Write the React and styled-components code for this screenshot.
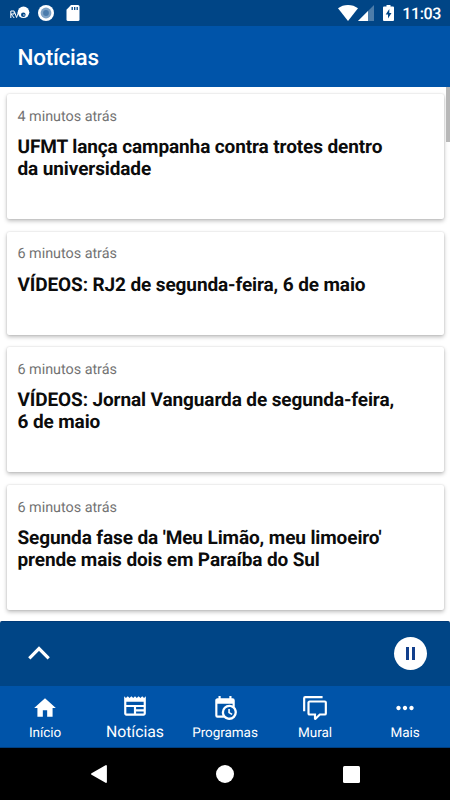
import React from "react";
import styled, { createGlobalStyle } from "styled-components";

const news = [
  {
    time: "4 minutos atrás",
    lines: ["UFMT lança campanha contra trotes dentro", "da universidade"],
  },
  {
    time: "6 minutos atrás",
    lines: ["VÍDEOS: RJ2 de segunda-feira, 6 de maio"],
  },
  {
    time: "6 minutos atrás",
    lines: ["VÍDEOS: Jornal Vanguarda de segunda-feira,", "6 de maio"],
  },
  {
    time: "6 minutos atrás",
    lines: ["Segunda fase da 'Meu Limão, meu limoeiro'", "prende mais dois em Paraíba do Sul"],
  },
];

const tabs = [
  { label: "Início", path: "M10 20v-6h4v6h5v-8h3L12 3 2 12h3v8z" },
  {
    label: "Notícias",
    active: true,
    path:
      "M22 3l-1.67 1.67L18.67 3 17 4.67 15.33 3l-1.66 1.67L12 3l-1.67 1.67L8.67 3 7 4.67 5.33 3 3.67 4.67 2 3v16c0 1.1.9 2 2 2h16c1.1 0 2-.9 2-2V3zM11 19H4v-6h7v6zm9 0h-7v-2h7v2zm0-4h-7v-2h7v2zm0-4H4V8h16v3z",
  },
  {
    label: "Programas",
    path:
      "M15 13h1.5v2.82l2.44 1.41-.75 1.3L15 16.69V13M19 8H5v11h4.67C9.24 18.09 9 17.07 9 16a7 7 0 0 1 7-7c1.07 0 2.09.24 3 .67V8M5 21a2 2 0 0 1-2-2V5c0-1.11.89-2 2-2h1V1h2v2h8V1h2v2h1a2 2 0 0 1 2 2v6.1c1.24 1.26 2 2.99 2 4.9a7 7 0 0 1-7 7c-1.91 0-3.64-.76-4.9-2H5m11-9.85A4.85 4.85 0 0 0 11.15 16c0 2.68 2.17 4.85 4.85 4.85A4.85 4.85 0 0 0 20.85 16c0-2.68-2.17-4.85-4.85-4.85z",
  },
  {
    label: "Mural",
    path:
      "M12 23a1 1 0 0 1-1-1v-3H7a2 2 0 0 1-2-2V7c0-1.11.9-2 2-2h14a2 2 0 0 1 2 2v10a2 2 0 0 1-2 2h-4.1l-3.7 3.71c-.2.19-.45.29-.7.29H12m1-6v3.08L16.08 17H21V7H7v10h6M3 15H1V3a2 2 0 0 1 2-2h16v2H3v12z",
  },
  {
    label: "Mais",
    path:
      "M6 10c-1.1 0-2 .9-2 2s.9 2 2 2 2-.9 2-2-.9-2-2-2zm12 0c-1.1 0-2 .9-2 2s.9 2 2 2 2-.9 2-2-.9-2-2-2zm-6 0c-1.1 0-2 .9-2 2s.9 2 2 2 2-.9 2-2-.9-2-2-2z",
  },
];

export default function App() {
  return (
    <Screen>
      <GlobalStyle />
      <StatusBar>
        <StatusIcons>
          <svg width="20" height="14" viewBox="0 0 20 14">
            <g fill="none" stroke="#fff" strokeWidth="1">
              <path d="M.8 12V5h3.4v3H1l3.2 4" />
              <path d="M4.6 6l2 5.5L8.5 6" />
            </g>
            <circle cx="13.5" cy="6.3" r="5.8" fill="#fff" />
            <circle cx="13.3" cy="8.7" r="2.3" fill="#004586" />
            <circle cx="13.9" cy="8.9" r="1" fill="#7fa3c6" />
          </svg>
          <svg width="16" height="16" viewBox="0 0 16 16">
            <circle cx="8" cy="8" r="8" fill="#fff" />
            <circle cx="8" cy="8" r="5.4" fill="#7fa3c6" />
            <circle cx="8" cy="8" r="2.9" fill="#4b7cac" />
          </svg>
          <svg width="14" height="16" viewBox="0 0 14 16">
            <path
              d="M5 0h7a1.5 1.5 0 0 1 1.5 1.5v13A1.5 1.5 0 0 1 12 16H2a1.5 1.5 0 0 1-1.5-1.5V4.7z"
              fill="#fff"
            />
            <path d="M6.2 2v3M8.7 2v3M11.2 2v3" stroke="#004586" strokeWidth="1.3" />
          </svg>
        </StatusIcons>
        <StatusIcons $right>
          <svg width="20" height="16" viewBox="0 0 20 16">
            <path d="M10 16L0 3.3C2.8 1.2 6.2 0 10 0s7.2 1.2 10 3.3z" fill="#fff" />
          </svg>
          <svg width="16" height="16" viewBox="0 0 16 16">
            <path d="M0 16L16 0v16z" fill="#fff" opacity=".3" />
            <path d="M0 16L10 6v10z" fill="#fff" />
          </svg>
          <Battery width="11" height="16" viewBox="0 0 11 16">
            <path
              d="M1 1.6h2.5V0h4v1.6H10a1 1 0 0 1 1 1V15a1 1 0 0 1-1 1H1a1 1 0 0 1-1-1V2.6a1 1 0 0 1 1-1z"
              fill="#fff"
            />
            <path d="M6.3 4L2.7 9.6H5v4l3.5-5.7H6.3z" fill="#004586" />
          </Battery>
          <Clock>11:03</Clock>
        </StatusIcons>
      </StatusBar>
      <Header>Notícias</Header>
      <List>
        {news.map((item, i) => (
          <Card key={i} $short={item.lines.length === 1}>
            <Time>{item.time}</Time>
            <Title>
              {item.lines.map(line => (
                <span key={line}>{line}</span>
              ))}
            </Title>
          </Card>
        ))}
        <ScrollThumb />
      </List>
      <Player>
        <svg width="22" height="14" viewBox="0 0 22 14">
          <path d="M1.3 12.3L11 2.6l9.7 9.7" fill="none" stroke="#fff" strokeWidth="3.2" />
        </svg>
        <PauseButton>
          <PauseBar />
          <PauseBar />
        </PauseButton>
      </Player>
      <TabBar>
        {tabs.map(tab => (
          <Tab key={tab.label} $active={tab.active}>
            <svg width="26" height="26" viewBox="0 0 24 24" fill="#fff">
              <path d={tab.path} />
            </svg>
            <TabLabel $active={tab.active}>{tab.label}</TabLabel>
          </Tab>
        ))}
      </TabBar>
      <SystemNav>
        <svg width="16" height="18" viewBox="0 0 16 18">
          <path d="M15 1v16L1 9z" fill="#fff" stroke="#fff" strokeWidth="1.8" strokeLinejoin="round" />
        </svg>
        <HomeKey />
        <RecentsKey />
      </SystemNav>
    </Screen>
  );
}

const GlobalStyle = createGlobalStyle`
  * {
    box-sizing: border-box;
  }
  body {
    margin: 0;
    background: #000;
    font-family: Roboto, sans-serif;
    text-rendering: geometricPrecision;
  }
  svg {
    display: block;
    flex-shrink: 0;
  }
`;

const Screen = styled.div`
  width: 450px;
  height: 800px;
  display: flex;
  flex-direction: column;
  overflow: hidden;
  background: #fff;
`;

const StatusBar = styled.div`
  height: 26px;
  flex-shrink: 0;
  display: flex;
  justify-content: space-between;
  align-items: center;
  padding: 0 9px 0 10px;
  background: #004586;
`;

const StatusIcons = styled.div`
  display: flex;
  align-items: center;
  gap: ${props => (props.$right ? "0" : "8px")};
  svg:last-child {
    margin-left: 4px;
  }
`;

const Battery = styled.svg`
  margin-left: 9px;
`;

const Clock = styled.span`
  margin-left: 8px;
  padding-top: 2px;
  color: #fff;
  font-size: 16px;
  font-weight: 500;
  letter-spacing: -0.35px;
  line-height: 26px;
`;

const Header = styled.header`
  height: 61px;
  flex-shrink: 0;
  padding-left: 17.5px;
  background: #0054a9;
  color: #fff;
  font-size: 22.5px;
  font-weight: 500;
  letter-spacing: -0.25px;
  line-height: 65px;
`;

const List = styled.main`
  position: relative;
  flex: 1;
  min-height: 0;
  display: flex;
  flex-direction: column;
  gap: 12.6px;
  padding: 7px 6.5px 0;
  background: #fff;
`;

const Card = styled.article`
  height: ${props => (props.$short ? "103.1px" : "125.1px")};
  flex-shrink: 0;
  padding: 13.6px 11px 0;
  border-radius: 2px;
  background: #fff;
  box-shadow: 0 2px 4px rgba(0, 0, 0, 0.26), 0 0 2px rgba(0, 0, 0, 0.14);
`;

const Time = styled.div`
  color: #737373;
  font-size: 14.4px;
  letter-spacing: -0.03px;
  line-height: 18px;
`;

const Title = styled.h2`
  margin: 10.3px 0 0;
  color: #0c0c0c;
  font-size: 19px;
  font-weight: 700;
  letter-spacing: -0.11px;
  line-height: 22px;
  white-space: nowrap;
  span {
    display: block;
  }
`;

const ScrollThumb = styled.div`
  position: absolute;
  top: 0;
  right: 0;
  width: 4px;
  height: 55px;
  background: #b8b8b8;
`;

const Player = styled.section`
  height: 65px;
  flex-shrink: 0;
  display: flex;
  justify-content: space-between;
  align-items: center;
  padding: 0 23px 2px 28px;
  border-top: 1px solid #003a78;
  border-radius: 2px 2px 0 0;
  background: #004586;
`;

const PauseButton = styled.button`
  width: 33px;
  height: 33px;
  display: flex;
  justify-content: center;
  align-items: center;
  gap: 3px;
  padding: 0;
  border: 0;
  border-radius: 50%;
  background: #fff;
`;

const PauseBar = styled.i`
  width: 3.4px;
  height: 13px;
  background: #123f8c;
`;

const TabBar = styled.nav`
  height: 62px;
  flex-shrink: 0;
  display: grid;
  grid-template-columns: repeat(5, 1fr);
  border-bottom: 1px solid #003f80;
  background: #0054a9;
`;

const Tab = styled.div`
  display: flex;
  flex-direction: column;
  align-items: center;
  padding-top: ${props => (props.$active ? "7px" : "9px")};
`;

const TabLabel = styled.span`
  margin-top: ${props => (props.$active ? "4px" : "3px")};
  color: #fff;
  font-size: ${props => (props.$active ? "15.8px" : "13.5px")};
  letter-spacing: -0.05px;
  line-height: 18px;
`;

const SystemNav = styled.footer`
  height: 52px;
  flex-shrink: 0;
  display: flex;
  justify-content: space-between;
  align-items: center;
  padding: 0 90px 0 91px;
  background: #000;
`;

const HomeKey = styled.div`
  width: 18px;
  height: 18px;
  border-radius: 50%;
  background: #fff;
`;

const RecentsKey = styled.div`
  width: 17px;
  height: 17px;
  border-radius: 1.5px;
  background: #fff;
`;
